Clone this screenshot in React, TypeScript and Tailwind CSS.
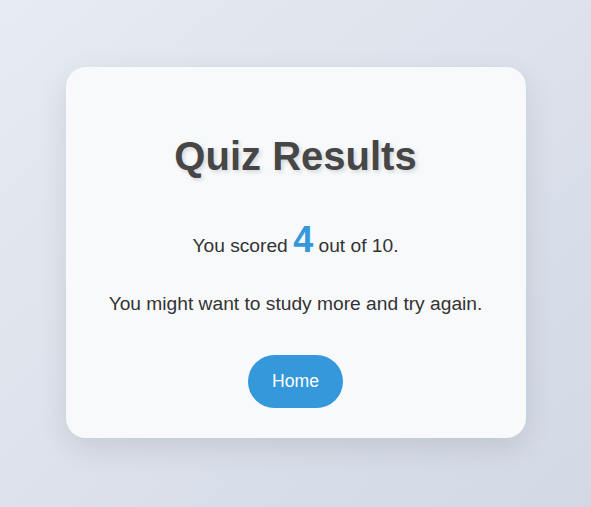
export default function App() {
  const score = 4;
  const total = 10;

  return (
    <div
      className="flex h-screen w-full items-center justify-center bg-gradient-to-br from-[#e7ebf2] to-[#d2d9e5] pb-[3px]"
      style={{ fontFamily: '"Liberation Sans", Arial, sans-serif' }}
    >
      <div className="flex w-[460px] flex-col items-center rounded-[20px] bg-[#f8f9fb] px-10 pt-[66px] pb-[30px] text-center shadow-[0_10px_30px_rgba(0,0,0,0.1)]">
        <h1 className="text-[40px] leading-[46px] font-bold text-[#464646] [text-shadow:2px_2px_4px_rgba(0,0,0,0.15)]">
          Quiz Results
        </h1>
        <p className="mt-[40px] text-[19.2px] leading-[normal] text-[#333]">
          You scored{" "}
          <span className="text-[36px] font-bold text-[#3498db]">{score}</span>{" "}
          out of {total}.
        </p>
        <p className="mt-[32px] text-[19.2px] leading-[normal] text-[#333]">
          You might want to study more and try again.
        </p>
        <button className="mt-[40px] rounded-full bg-[#3498db] px-6 py-4 text-[17.6px] leading-[normal] text-white">
          Home
        </button>
      </div>
    </div>
  );
}
